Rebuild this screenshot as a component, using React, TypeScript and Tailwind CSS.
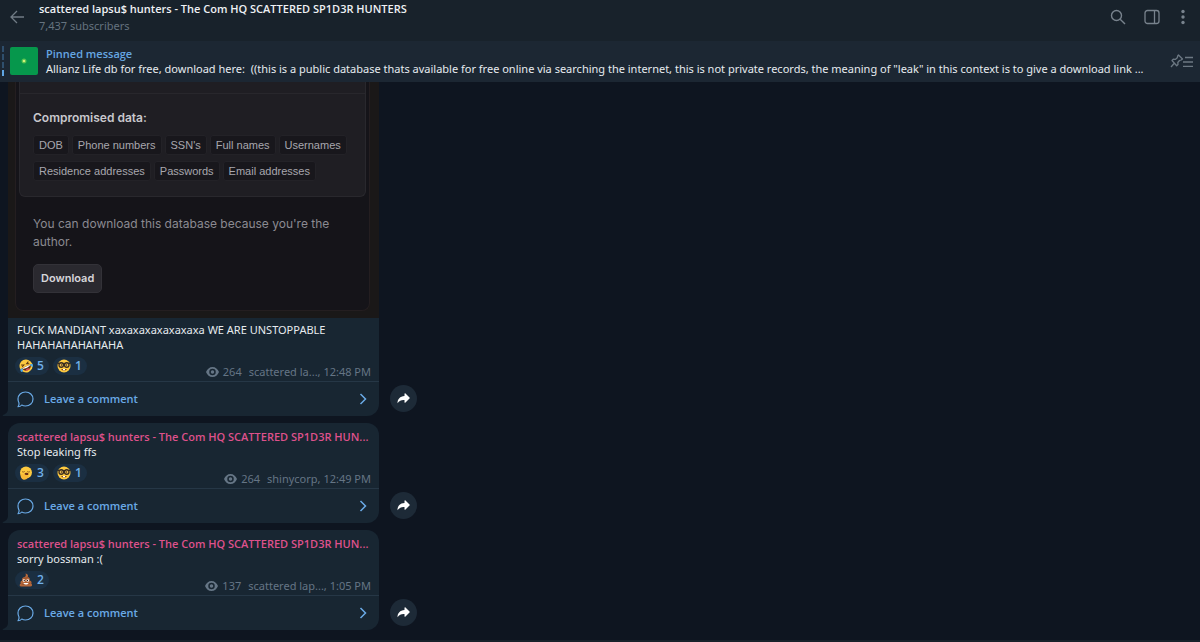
import React from 'react';

interface Reaction {
  emoji: 'rofl' | 'nerd' | 'yawn' | 'poop';
  count: number;
}

interface Message {
  id: number;
  author?: string;
  lines: string[];
  reactions: Reaction[];
  views: number;
  signature: string;
  withPhoto?: boolean;
}

const channel = 'scattered lapsu$ hunters - The Com HQ SCATTERED SP1D3R HUNTERS';
const shortChannel = 'scattered lapsu$ hunters - The Com HQ SCATTERED SP1D3R HUN...';

const messages: Message[] = [
  {
    id: 1,
    lines: ['FUCK MANDIANT xaxaxaxaxaxaxaxa WE ARE UNSTOPPABLE', 'HAHAHAHAHAHAHA'],
    reactions: [{ emoji: 'rofl', count: 5 }, { emoji: 'nerd', count: 1 }],
    views: 264,
    signature: 'scattered la..., 12:48 PM',
    withPhoto: true,
  },
  {
    id: 2,
    author: shortChannel,
    lines: ['Stop leaking ffs'],
    reactions: [{ emoji: 'yawn', count: 3 }, { emoji: 'nerd', count: 1 }],
    views: 264,
    signature: 'shinycorp, 12:49 PM',
  },
  {
    id: 3,
    author: shortChannel,
    lines: ['sorry bossman :('],
    reactions: [{ emoji: 'poop', count: 2 }],
    views: 137,
    signature: 'scattered lap..., 1:05 PM',
  },
];

const dataTypes = [
  ['DOB', 'Phone numbers', "SSN's", 'Full names', 'Usernames'],
  ['Residence addresses', 'Passwords', 'Email addresses'],
];

function Emoji({ name }: { name: Reaction['emoji'] }) {
  if (name === 'poop') {
    return (
      <svg viewBox="0 0 28 28" className="size-3.5" aria-label="poop">
        <path d="M13 1c5 1 6 4 4.500 7 4 1 5 4 3.500 7 4 1 5 4 3.500 6 3 2 2 6-2 6H5c-4 0-5-4-1.500-6C2 18 3 16 6.500 15 5 11 7 9 11 8c3-1 3-4 2-7z" fill="#b5673a" />
        <path d="M9 10c4 1 7 0 9-2M5 22c6 2 13 1 18-2" stroke="#8a4726" strokeWidth="1.500" fill="none" />
        <circle cx="10" cy="15" r="2.600" fill="#fff" />
        <circle cx="17.500" cy="15" r="2.600" fill="#fff" />
        <circle cx="10.500" cy="15" r="1.300" fill="#2b1a12" />
        <circle cx="17" cy="15" r="1.300" fill="#2b1a12" />
        <path d="M9 20h10c-1 4-9 4-10 0z" fill="#fff" />
      </svg>
    );
  }
  if (name === 'rofl') {
    return (
      <svg viewBox="0 0 28 28" className="size-3.5" aria-label="rolling on the floor laughing">
        <g transform="rotate(-25 14 14)">
          <circle cx="14" cy="14" r="13" fill="#fdc93f" />
          <path d="M6 8l5 2.500-5 2M22 8l-5 2.500 5 2" stroke="#5b3413" strokeWidth="2" fill="none" />
          <path d="M5 15h18c0 11-18 11-18 0z" fill="#5b2a13" />
          <path d="M6 15h16c0 4-16 4-16 0z" fill="#fff" />
          <path d="M9 22c3-3 7-3 10 0-3 2-7 2-10 0z" fill="#e8505b" />
          <path d="M5 14c-5 1-6 4-4 7 3 1 5-2 4-7zM23 14c5 1 6 4 4 7-3 1-5-2-4-7z" fill="#4aa8e8" />
        </g>
      </svg>
    );
  }
  if (name === 'nerd') {
    return (
      <svg viewBox="0 0 28 28" className="size-3.5" aria-label="nerd">
        <circle cx="14" cy="14" r="13" fill="#fdc93f" />
        <path d="M1 9h26" stroke="#3a2c1f" strokeWidth="2.400" />
        <circle cx="8.500" cy="12" r="4.500" fill="#f3c75a" stroke="#3a2c1f" strokeWidth="2.600" />
        <circle cx="19.500" cy="12" r="4.500" fill="#f3c75a" stroke="#3a2c1f" strokeWidth="2.600" />
        <circle cx="9" cy="12" r="1.500" fill="#46270f" />
        <circle cx="19" cy="12" r="1.500" fill="#46270f" />
        <path d="M8 20c3 4 9 4 12 0z" fill="#8a4b17" />
        <path d="M12 20h4v2.500h-4z" fill="#fff" />
      </svg>
    );
  }
  return (
    <svg viewBox="0 0 28 28" className="size-3.5" aria-label="yawning">
      <circle cx="14" cy="13" r="12" fill="#fdc93f" />
      <path d="M6 11c2 1.500 4 1.500 5.500-.500M22 11c-2 1.500-4 1.500-5.500-.500" stroke="#7a4a18" strokeWidth="1.600" fill="none" />
      <ellipse cx="15" cy="16" rx="4" ry="2.500" fill="#6b2f14" />
      <path d="M3 17c3-1 8 0 15 2 3 1 2 3 0 4-3 4-6 5-10 4-3-1-5-5-5-10z" fill="#f7b836" />
    </svg>
  );
}

function LeakCard() {
  return (
    <div className="bg-[#1a1818] pr-[9px] pb-[7px] pl-[7px] font-[Inter,sans-serif]">
      <div className="rounded-b-lg border border-t-0 border-[#241e20] bg-[#151419] px-[3px] pb-[17px]">
        <div className="rounded-b-md border border-t-0 border-[#29282d] bg-[#1f1e23] pb-[15px]">
          <div className="h-3 border-b border-[#28272c]" />
          <div className="px-[13px] pt-[15px]">
            <h2 className="text-[12px] leading-[17px] font-semibold text-[#c9c8cd]">Compromised data:</h2>
            <div className="mt-[9px] flex flex-col gap-1.5">
              {dataTypes.map((row, i) => (
                <ul key={i} className="flex gap-[3px]">
                  {row.map(item => (
                    <li key={item} className="rounded-[3px] border border-[#232227] bg-[#18171c] px-[5px] font-['Liberation_Sans',sans-serif] text-[11px] leading-[18px] whitespace-nowrap text-[#a8a7ae]">
                      {item}
                    </li>
                  ))}
                </ul>
              ))}
            </div>
          </div>
        </div>
        <div className="px-[14px] pt-[18px]">
          <p className="text-[12px] leading-[18px] text-[#8b8a91]">
            You can download this database because you're the author.
          </p>
          <button type="button" className="mt-[13px] h-[29px] rounded-[5px] border border-[#333238] bg-[#2a292f] px-[7px] text-[11px] font-semibold text-[#d6d5da]">
            Download
          </button>
        </div>
      </div>
    </div>
  );
}

function EyeIcon() {
  return (
    <svg viewBox="0 0 26 20" className="h-2.5 w-[13px]" aria-hidden="true">
      <path fillRule="evenodd" fill="currentColor" d="M13 0c6 0 10.500 4 13 10-2.500 6-7 10-13 10S2.500 16 0 10C2.500 4 7 0 13 0zm0 3.500a6.500 6.500 0 1 0 0 13 6.500 6.500 0 0 0 0-13zm0 3a3.500 3.500 0 1 1 0 7 3.500 3.500 0 0 1 0-7z" />
    </svg>
  );
}

function MessageRow({ message }: { message: Message }) {
  return (
    <article className="flex items-end gap-[11px]">
      <div className="relative w-[371px]">
        <svg viewBox="0 0 12 12" className="absolute bottom-0 -left-1.5 size-3" aria-hidden="true">
          <path d="M6 0v5c0 3-2 5-5 6-1 .500 0 1 1 1h10V0z" fill="#182632" />
        </svg>
        <div className={`relative overflow-hidden rounded-br-xl bg-[#182632] ${message.withPhoto ? '' : 'rounded-t-xl'}`}>
          {message.withPhoto && <LeakCard />}
          <div className={`px-[7px] pb-0.5 ${message.withPhoto ? 'pt-1' : 'pt-1.5'}`}>
            <div className="px-0.5 leading-[15px] text-[#e6ebef]">
              {message.author && <h2 className="font-['Open_Sans',sans-serif] font-semibold whitespace-nowrap text-[#de518b]">{message.author}</h2>}
              {message.lines.map(line => (
                <p key={line}>{line}</p>
              ))}
            </div>
            <div className="mt-[5px] flex items-end justify-between">
              <div className="mb-1 flex gap-1">
                {message.reactions.map(r => (
                  <button key={r.emoji} type="button" className="flex h-[18px] items-center gap-1 rounded-full bg-[#1b2f42] pr-[5px] pl-1 font-['Open_Sans',sans-serif] text-[12px] font-semibold text-[#6fb0ea]">
                    <Emoji name={r.emoji} />
                    {r.count}
                  </button>
                ))}
              </div>
              <div className="flex items-center leading-[15px] text-[#657585]">
                <EyeIcon />
                <span className="ml-1">{message.views}</span>
                <span className="ml-[7px] pr-px">{message.signature}</span>
              </div>
            </div>
          </div>
          <button type="button" className="flex h-[35px] w-full items-center border-t border-[#263746] pr-3 pl-[9px] font-['Open_Sans',sans-serif] font-semibold text-[#6aaae6]">
            <svg viewBox="0 0 34 34" className="size-[17px]" fill="none" stroke="currentColor" strokeWidth="2.400" aria-hidden="true">
              <path d="M17 2c8.500 0 15 6 15 14s-6.500 14-15 14c-3 0-5-.500-7.500-2C7.500 30.500 5 31.500 2 31.500c2-2.500 2.500-4.500 2-7.500C2.500 21.500 2 19 2 16 2 8 8.500 2 17 2z" strokeLinejoin="round" />
            </svg>
            <span className="ml-2.5">Leave a comment</span>
            <svg viewBox="0 0 8 12" className="ml-auto h-3 w-2" fill="none" stroke="currentColor" strokeWidth="1.500" aria-hidden="true">
              <path d="M1.500 1l5 5-5 5" />
            </svg>
          </button>
        </div>
      </div>
      <button type="button" aria-label="Forward" className="mb-1 flex size-[27px] items-center justify-center rounded-full bg-[#1d2a37] text-white">
        <svg viewBox="0 0 26 22" className="h-[11px] w-[13px]" aria-hidden="true">
          <path d="M15 1.500c0-1 1-1.500 2-.700l8 8c.800.800.800 1.600 0 2.400l-8 8c-1 .800-2 .300-2-.700V14C9 13.500 5 15 1 20.500 1 12 6 6.500 15 6z" fill="currentColor" />
        </svg>
      </button>
    </article>
  );
}

export default function App() {
  return (
    <div className="flex min-h-screen flex-col bg-[#0e1520] font-['Noto_Sans',sans-serif] text-[11px]">
      <header className="flex h-[41px] items-start bg-[#18222b] pr-3.5 pl-2.5">
        <button type="button" aria-label="Back" className="mt-2.5 text-[#707b85]">
          <svg viewBox="0 0 14 14" className="size-3.5" fill="none" stroke="currentColor" strokeWidth="1.300">
            <path d="M14 7H1.500M7 1L1 7l6 6" />
          </svg>
        </button>
        <div className="ml-[15px] min-w-0 flex-1 leading-[17px]">
          <h1 className="truncate font-['Open_Sans',sans-serif] font-semibold text-[#eef1f4]">{channel}</h1>
          <p className="text-[#65737f]">7,437 subscribers</p>
        </div>
        <div className="mt-[9px] flex items-center text-[#78838d]">
          <button type="button" aria-label="Search">
            <svg viewBox="0 0 16 16" className="size-4" fill="none" stroke="currentColor" strokeWidth="1.400">
              <circle cx="6.500" cy="6.500" r="5" />
              <path d="M10.200 10.200l4.800 4.800" />
            </svg>
          </button>
          <button type="button" aria-label="Toggle info panel" className="ml-[18px]">
            <svg viewBox="0 0 16 16" className="size-4" fill="none" stroke="currentColor" strokeWidth="1.300">
              <rect x="1" y="1.500" width="14" height="13" rx="2.500" />
              <path d="M10.500 1.500v13" />
            </svg>
          </button>
          <button type="button" aria-label="More" className="ml-5">
            <svg viewBox="0 0 6 16" className="h-4 w-1.5" fill="currentColor">
              <circle cx="3" cy="2.500" r="1.700" />
              <circle cx="3" cy="8" r="1.700" />
              <circle cx="3" cy="13.500" r="1.700" />
            </svg>
          </button>
        </div>
      </header>

      <section className="flex h-[41px] items-center bg-[#1c2733] pr-1.5 pb-0.5 pl-0.5">
        <div className="flex h-[30px] w-0.5 flex-col gap-0.5">
          <span className="flex-1 bg-[#2f4f6d]" />
          <span className="flex-1 bg-[#2f4f6d]" />
          <span className="flex-1 bg-[#2f4f6d]" />
          <span className="flex-1 bg-[#5fa5e2]" />
        </div>
        <svg viewBox="0 0 28 28" className="ml-1.5 size-7 rounded-[2px]" aria-hidden="true">
          <rect width="28" height="28" fill="#06974c" />
          <circle cx="14" cy="14" r="2.500" fill="#4fc150" />
          <circle cx="14" cy="14" r="1.300" fill="#d3f27a" />
        </svg>
        <div className="ml-2 min-w-0 flex-1 leading-[15px]">
          <h2 className="font-['Open_Sans',sans-serif] font-semibold text-[#66a6e2]">Pinned message</h2>
          <p className="whitespace-pre text-[#e6ebef]">
            {'Allianz Life db for free, download here:  ((this is a public database thats available for free online via searching the internet, this is not private records, the meaning of "leak" in this context is to give a download link ...'}
          </p>
        </div>
        <button type="button" aria-label="Pinned messages" className="ml-3.5 text-[#6c7883]">
          <svg viewBox="0 0 24 14" className="h-3.5 w-6" fill="none" stroke="currentColor" strokeWidth="1.300" strokeLinejoin="round">
            <path d="M8.500 1l4 4-1.300 1-1.700.500-1.700 2 .200 2-1.300 1.300L2 6.500l1.300-1.300 2 .200 2-1.700.400-1.700zM4.300 9.200L1 13" />
            <path d="M15 3.500h8M13 8h10M13 12.300h10" />
          </svg>
        </button>
      </section>

      <main className="flex flex-1 flex-col gap-[7px] pl-2">
        {messages.map(m => (
          <MessageRow key={m.id} message={m} />
        ))}
      </main>
      <footer className="h-0.5 bg-[#18222b]" />
    </div>
  );
}
